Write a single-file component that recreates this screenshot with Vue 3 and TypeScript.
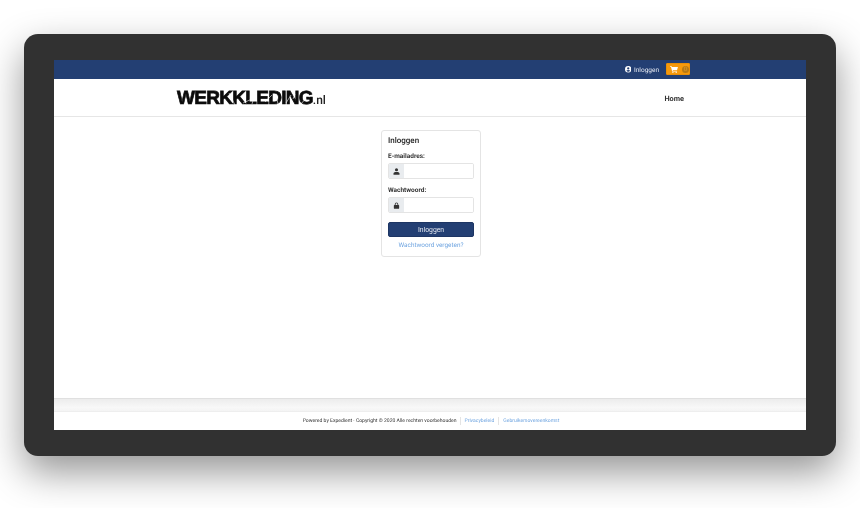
<template>
  <div class="stage">
    <div class="device">
      <div class="screen">
        <div class="topbar">
          <a class="user-link">
            <svg class="user-icon" viewBox="0 0 16 16">
              <path fill-rule="evenodd" d="M8 0a8 8 0 1 0 0 16A8 8 0 0 0 8 0zm0 3.2a2.8 2.8 0 1 1 0 5.6 2.8 2.8 0 0 1 0-5.6zM8 14a6 6 0 0 1-4.6-2.2C4 10.6 5.5 10 8 10s4 .6 4.6 1.8A6 6 0 0 1 8 14z" />
            </svg>
            Inloggen
          </a>
          <div class="cart">
            <svg class="cart-icon" viewBox="0 0 18 16">
              <path d="M0 0h3.2l.6 2H18l-2 7H6l.4 1.6H16V12.500H4.800L2 1.800H0z" />
              <circle cx="6.500" cy="14.500" r="1.500" />
              <circle cx="14" cy="14.500" r="1.500" />
            </svg>
            <span class="cart-count">0</span>
          </div>
        </div>

        <header class="header">
          <div class="logo">
            WERKKLEDING<span class="logo-tld">.nl</span>
            <!-- worn print effect on the logo -->
            <svg class="logo-scratches" viewBox="0 0 150 16">
              <path d="M52 2l6 12M66 12l9-4M78 3l-3 10M88 11l7-7M99 4l2 9M109 12l5-8M118 3l-2 5M124 13l5-6M129 3l4 3" />
            </svg>
          </div>
          <nav class="nav">Home</nav>
        </header>

        <main class="main">
          <form class="login-card" @submit.prevent>
            <h3 class="login-title">Inloggen</h3>

            <label class="field-label">E-mailadres:</label>
            <div class="input-group">
              <span class="addon">
                <svg class="addon-icon" viewBox="0 0 14 14">
                  <circle cx="7" cy="3.600" r="3.100" />
                  <path d="M1 13.500v-2c0-2.200 1.800-3.700 3.600-3.700h4.800c1.800 0 3.600 1.500 3.600 3.700v2z" />
                </svg>
              </span>
              <input class="input" type="text" />
            </div>

            <label class="field-label">Wachtwoord:</label>
            <div class="input-group">
              <span class="addon">
                <svg class="addon-icon" viewBox="0 0 14 14">
                  <path fill-rule="evenodd" d="M3.500 6V4.500a3.500 3.500 0 0 1 7 0V6h.7c.6 0 1.100.5 1.100 1.100v5.300c0 .6-.5 1.100-1.100 1.100H2.800c-.6 0-1.100-.5-1.100-1.100V7.100C1.700 6.500 2.200 6 2.800 6zm1.700 0h3.600V4.500a1.800 1.800 0 0 0-3.600 0z" />
                </svg>
              </span>
              <input class="input" type="password" />
            </div>

            <button class="submit" type="submit">Inloggen</button>
            <a class="forgot">Wachtwoord vergeten?</a>
          </form>
        </main>

        <div class="strip"></div>

        <footer class="footer">
          <span class="copy">Powered by Expedient · Copyright © 2020 Alle rechten voorbehouden</span>
          <a class="foot-link">Privacybeleid</a>
          <a class="foot-link">Gebruikersovereenkomst</a>
        </footer>
      </div>
    </div>
  </div>
</template>

<script setup lang="ts">
</script>

<style>
html,
body {
  margin: 0;
  background: #fff;
}
</style>

<style scoped>
.stage {
  width: 860px;
  height: 508px;
  padding: 34px 24px 52px;
  box-sizing: border-box;
  overflow: hidden;
  font-family: Roboto, "Liberation Sans", sans-serif;
  text-rendering: geometricPrecision;
}

.device {
  height: 422px;
  padding: 26px 30px;
  box-sizing: border-box;
  background: #313131;
  border-radius: 14px;
  box-shadow: 0 16px 38px rgba(0, 0, 0, 0.42);
}

.screen {
  height: 100%;
  display: flex;
  flex-direction: column;
  background: #fff;
  filter: blur(0.3px);
}

.topbar {
  height: 19px;
  flex: none;
  display: flex;
  align-items: center;
  justify-content: flex-end;
  padding-right: 116px;
  background: #233f73;
  color: #e6eaf2;
  font-size: 6.500px;
}

.user-link {
  display: flex;
  align-items: center;
  gap: 3px;
  margin-right: 7px;
}

.user-icon {
  width: 6.500px;
  height: 6.500px;
  fill: #fff;
}

.cart {
  width: 24px;
  height: 12px;
  margin-top: -1px;
  display: flex;
  align-items: center;
  gap: 4px;
  padding-left: 3px;
  box-sizing: border-box;
  background: #f5990d;
  border: 1px solid #e88f08;
  border-radius: 1px;
}

.cart-icon {
  width: 8px;
  height: 7px;
  fill: #fff;
}

.cart-count {
  width: 7px;
  height: 7px;
  line-height: 7px;
  text-align: center;
  border-radius: 50%;
  background: #b97a14;
  color: #dd9c2e;
  font-size: 6px;
}

.header {
  height: 38px;
  flex: none;
  display: flex;
  align-items: center;
  justify-content: space-between;
  padding: 2px 122px 0 123px;
  box-sizing: border-box;
  border-bottom: 1px solid #e6e6e6;
}

.logo {
  position: relative;
  margin-top: 1px;
  font-family: "Liberation Sans", Arial, sans-serif;
  font-size: 19px;
  font-weight: 700;
  letter-spacing: -0.7px;
  color: #0c0c0c;
  -webkit-text-stroke: 0.7px #0c0c0c;
}

.logo-tld {
  font-family: Roboto, sans-serif;
  font-size: 12px;
  font-weight: 500;
  letter-spacing: 0;
  -webkit-text-stroke: 0;
  color: #222;
}

.logo-scratches {
  position: absolute;
  left: 0;
  top: 3px;
  width: 150px;
  height: 16px;
  fill: none;
  stroke: #fff;
  stroke-width: 0.6;
}

.nav {
  font-size: 7.300px;
  font-weight: 700;
  color: #333;
}

.main {
  flex: 1;
  display: flex;
  justify-content: center;
  align-items: flex-start;
  padding: 13px 0 0 2px;
}

.login-card {
  width: 100px;
  height: 127px;
  padding: 5px 6px;
  box-sizing: border-box;
  display: flex;
  flex-direction: column;
  background: #fff;
  border: 1px solid #e4e4e4;
  border-radius: 3px;
}

.login-title {
  margin: 0 0 5px;
  font-size: 8px;
  line-height: 10px;
  font-weight: 500;
  color: #222;
}

.field-label {
  margin-bottom: 3px;
  font-size: 6.500px;
  line-height: 10px;
  height: 9px;
  font-weight: 700;
  color: #333;
}

.input-group {
  height: 16px;
  flex: none;
  display: flex;
  margin-bottom: 6px;
  border: 1px solid #e4e4e4;
  box-sizing: border-box;
  border-radius: 2px;
  overflow: hidden;
}

.addon {
  width: 15px;
  flex: none;
  display: flex;
  align-items: center;
  justify-content: center;
  background: #e9ecef;
}

.addon-icon {
  width: 7px;
  height: 7px;
  fill: #333;
}

.input {
  flex: 1;
  min-width: 0;
  padding: 0;
  border: none;
  outline: none;
  background: #fff;
}

.submit {
  height: 15px;
  flex: none;
  margin-top: 3px;
  padding: 0;
  background: #233f73;
  border: 1px solid #1d3563;
  border-radius: 2px;
  color: #e6eaf2;
  font-family: inherit;
  font-size: 6.800px;
}

.forgot {
  margin-top: 4px;
  text-align: center;
  font-size: 6.400px;
  line-height: 9px;
  color: #6ea4e0;
}

.strip {
  height: 13px;
  flex: none;
  background: linear-gradient(#ececec, #f8f8f8 70%, #f4f4f4);
  border-top: 1px solid #e0e0e0;
  box-sizing: border-box;
}

.footer {
  height: 19px;
  flex: none;
  display: flex;
  align-items: center;
  justify-content: center;
  padding-left: 6px;
  border-top: 1px solid #eeeeee;
  box-sizing: border-box;
  font-size: 5.050px;
  color: #333;
}

.copy {
  padding-right: 3px;
}

.foot-link {
  padding: 1px 4px;
  border-left: 1px solid #e4e4e4;
  color: #6ea4e0;
}
</style>
